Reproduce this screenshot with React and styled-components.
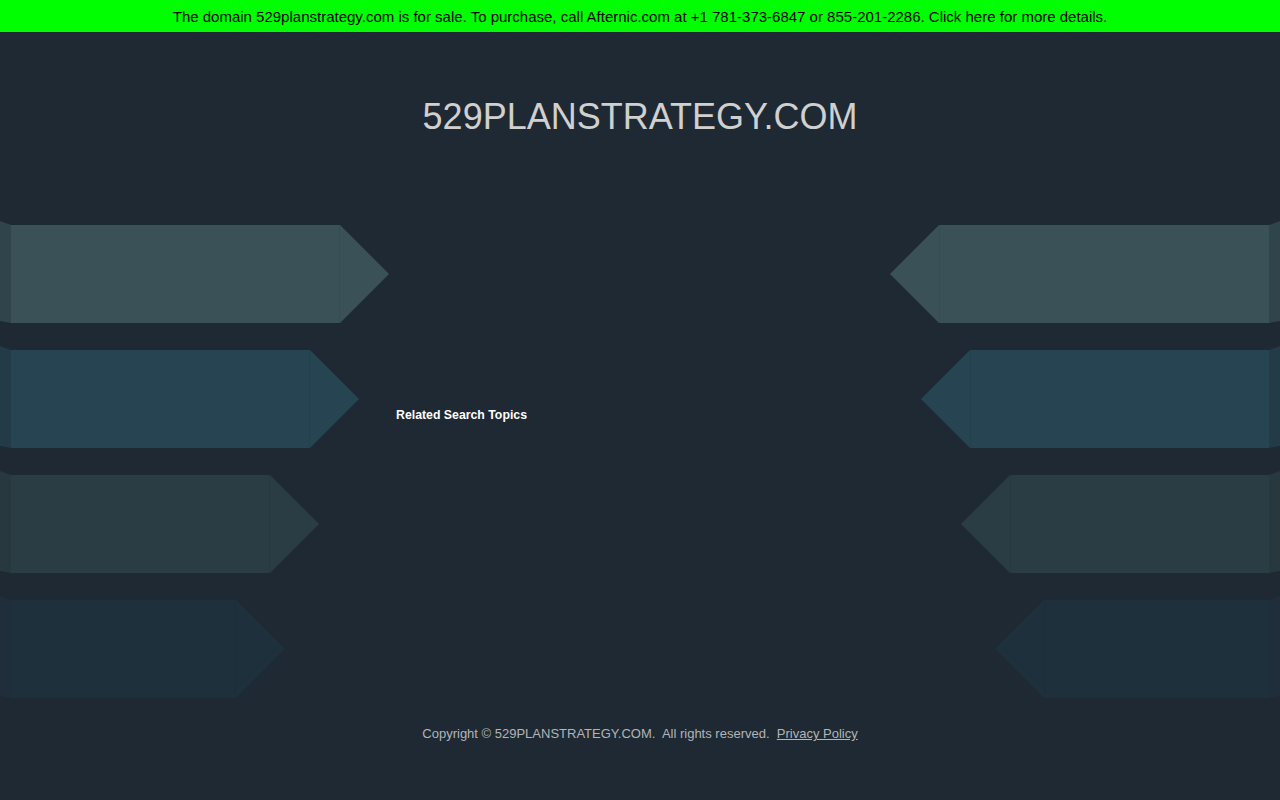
import React from 'react';
import styled, { createGlobalStyle } from 'styled-components';

const GlobalStyle = createGlobalStyle`
  html, body {
    margin: 0;
    padding: 0;
    background: #1e2933;
    font-family: "Liberation Sans", Arial, sans-serif;
  }
`;

const Page = styled.div`
  width: 1280px;
  height: 800px;
  background: #1e2933;
  overflow: hidden;
`;

const SaleBar = styled.div`
  height: 32px;
  background: #00ff00;
  color: #000;
  font-size: 15px;
  line-height: 34px;
  text-align: center;
  white-space: nowrap;
`;

const Header = styled.header`
  box-sizing: border-box;
  height: 189px;
  padding-top: 64px;
  text-align: center;
`;

const Title = styled.h1`
  margin: 0;
  font-size: 36px;
  line-height: 41px;
  font-weight: normal;
  color: #d0d0d0;
`;

const Main = styled.main`
  display: grid;
  grid-template-columns: 390px 1fr 390px;
`;

const ArrowStack = styled.div`
  display: flex;
  flex-direction: column;
  align-items: ${p => (p.side === 'right' ? 'flex-end' : 'flex-start')};
  gap: 23px;
`;

const ArrowRow = styled.div`
  display: flex;
  flex-direction: ${p => (p.side === 'right' ? 'row-reverse' : 'row')};
  align-items: flex-start;
  height: 102px;
`;

const Edge = styled.div`
  width: 11px;
  height: 102px;
  background: ${p => p.color};
  clip-path: ${p =>
    p.side === 'right'
      ? 'polygon(0 4px, 100% 0, 100% 100px, 0 102px)'
      : 'polygon(0 0, 100% 4px, 100% 102px, 0 100px)'};
`;

const Body = styled.div`
  width: ${p => p.len}px;
  height: 98px;
  margin-top: 4px;
  background: ${p => p.color};
  box-sizing: border-box;
  ${p => (p.side === 'right' ? 'border-left' : 'border-right')}: 1px solid rgba(0, 0, 0, 0.07);
`;

const Tip = styled.div`
  width: 49px;
  height: 98px;
  margin-top: 4px;
  background: ${p => p.color};
  clip-path: ${p =>
    p.side === 'right'
      ? 'polygon(100% 0, 0 50%, 100% 100%)'
      : 'polygon(0 0, 100% 50%, 0 100%)'};
`;

const Center = styled.div`
  padding: 187px 0 0 6px;
`;

const Related = styled.h2`
  margin: 0;
  font-size: 12.3px;
  line-height: 15px;
  font-weight: bold;
  color: #fff;
`;

const Footer = styled.footer`
  padding-top: 29px;
  text-align: center;
  font-size: 13px;
  line-height: 14px;
  color: #b1b5b8;
`;

const FooterLink = styled.a`
  color: #b1b5b8;
  text-decoration: underline;
`;

const arrows = [
  { color: '#3a5257', edge: '#2f454b', left: 329, right: 330 },
  { color: '#264452', edge: '#233b47', left: 299, right: 299 },
  { color: '#2b3d44', edge: '#28383f', left: 259, right: 259 },
  { color: '#1f303d', edge: '#1f2e3a', left: 225, right: 225 },
];

function Arrow({ side, item }) {
  const len = side === 'right' ? item.right : item.left;
  return (
    <ArrowRow side={side}>
      <Edge side={side} color={item.edge} />
      <Body side={side} len={len} color={item.color} />
      <Tip side={side} color={item.color} />
    </ArrowRow>
  );
}

export default function App() {
  return (
    <Page>
      <GlobalStyle />
      <SaleBar>
        The domain 529planstrategy.com is for sale. To purchase, call Afternic.com at +1 781-373-6847 or 855-201-2286. Click here for more details.
      </SaleBar>
      <Header>
        <Title>529PLANSTRATEGY.COM</Title>
      </Header>
      <Main>
        <ArrowStack side="left">
          {arrows.map((a, i) => (
            <Arrow key={i} side="left" item={a} />
          ))}
        </ArrowStack>
        <Center>
          <Related>Related Search Topics</Related>
        </Center>
        <ArrowStack side="right">
          {arrows.map((a, i) => (
            <Arrow key={i} side="right" item={a} />
          ))}
        </ArrowStack>
      </Main>
      <Footer>
        Copyright © 529PLANSTRATEGY.COM.&nbsp; All rights reserved.&nbsp;&nbsp;
        <FooterLink href="#">Privacy Policy</FooterLink>
      </Footer>
    </Page>
  );
}
